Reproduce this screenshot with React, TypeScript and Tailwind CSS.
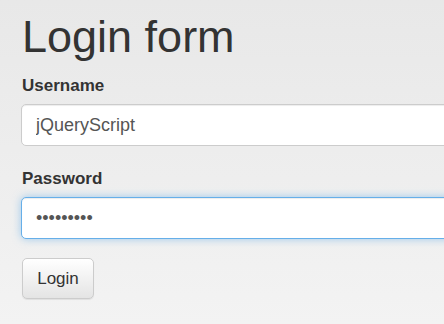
import React from "react";

export default function App() {
  return (
    <div
      className="w-[444px] h-[324px] overflow-hidden bg-gradient-to-b from-[#e8e8e8] to-[#f3f3f3] text-[#333]"
      style={{ fontFamily: '"Liberation Sans", Arial, Helvetica, sans-serif' }}
    >
      <div className="flex flex-col items-start pl-[21px]">
        <h1 className="mt-[14px] ml-[1px] text-[45px] leading-[45px] font-normal text-[#333]">Login form</h1>
        <label className="mt-[17px] ml-[1px] text-[17px] leading-[20px] font-bold">Username</label>
        <input
          type="text"
          defaultValue="jQueryScript"
          readOnly
          className="mt-[8px] w-[520px] h-[42px] rounded-[5px] border border-[#ccc] bg-white px-[14px] text-[18px] text-[#555] outline-none shadow-[inset_0_1px_1px_rgba(0,0,0,0.075)]"
        />
        <label className="mt-[23px] ml-[1px] text-[17px] leading-[20px] font-bold">Password</label>
        <input
          type="password"
          defaultValue="123456789"
          readOnly
          className="mt-[8px] w-[520px] h-[42px] rounded-[5px] border border-[#66afe9] bg-white px-[14px] text-[18px] text-[#555] outline-none shadow-[inset_0_1px_1px_rgba(0,0,0,0.075),0_0_8px_rgba(102,175,233,0.6)]"
        />
        <button
          type="button"
          className="mt-[19px] ml-[1px] w-[72px] h-[41px] rounded-[5px] border border-[#ccc] bg-gradient-to-b from-white to-[#e4e4e4] text-[17px] text-[#333] shadow-[inset_0_1px_0_rgba(255,255,255,0.15),0_1px_1px_rgba(0,0,0,0.075)]"
        >
          Login
        </button>
      </div>
    </div>
  );
}
